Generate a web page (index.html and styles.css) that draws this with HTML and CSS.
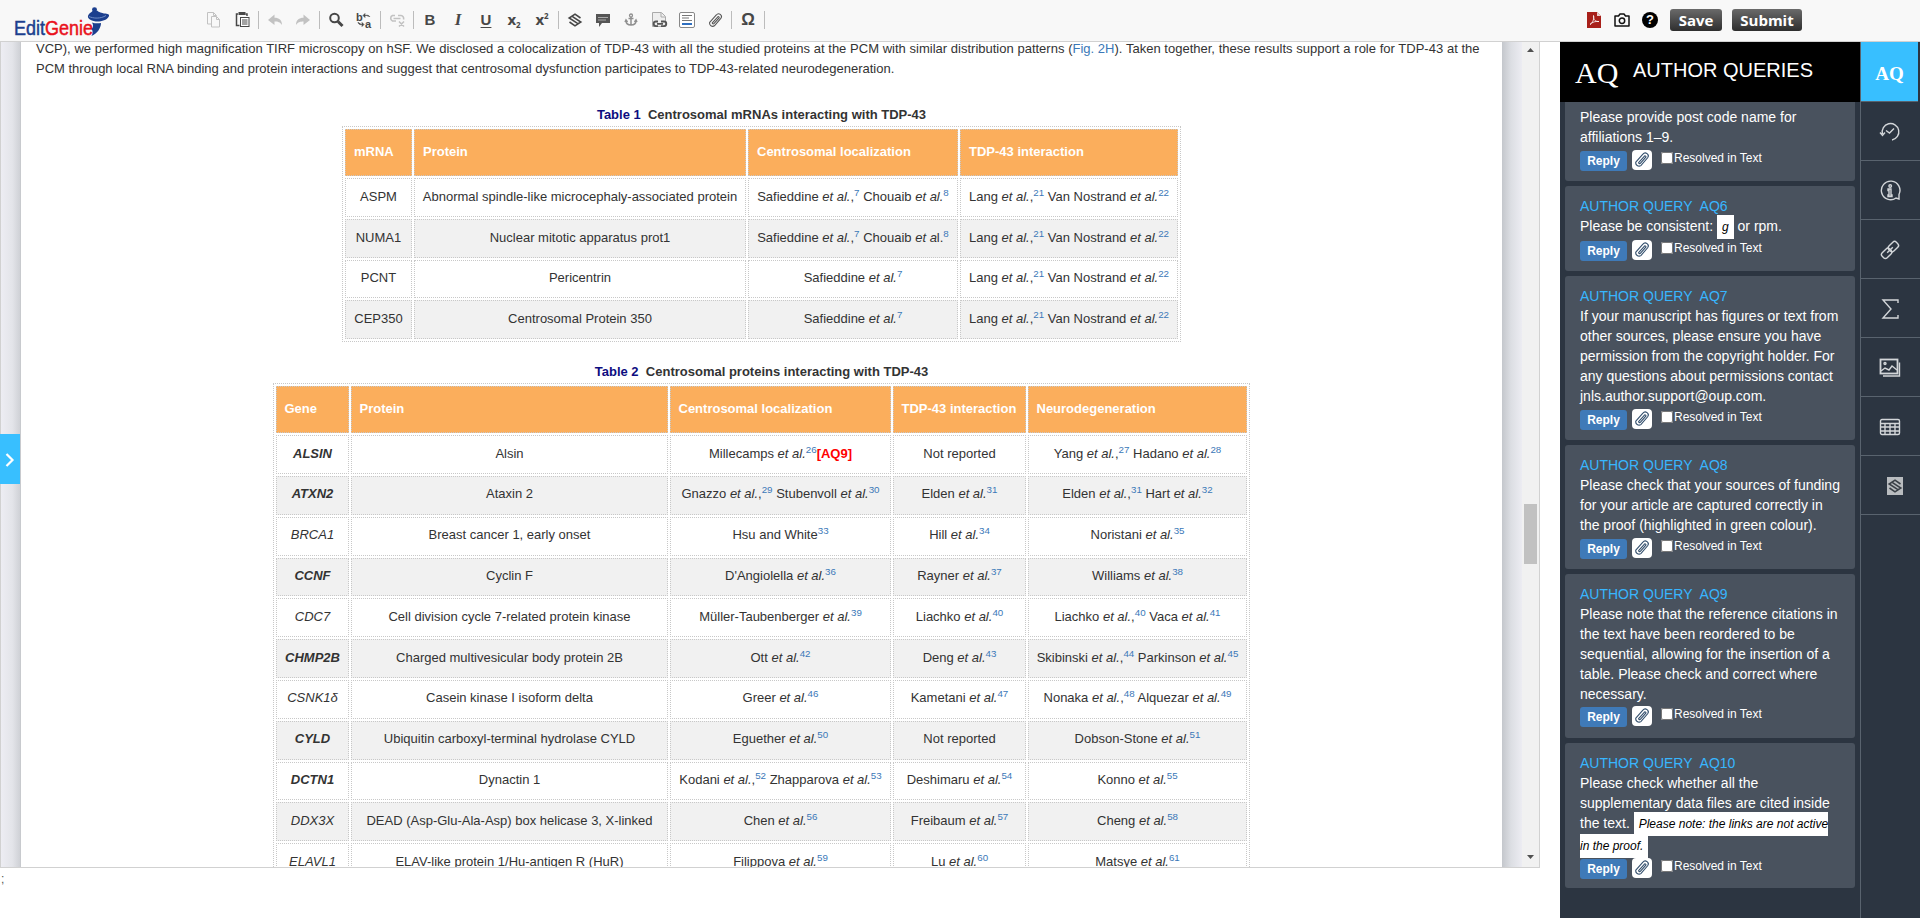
FILE: index.html
```html
<!DOCTYPE html>
<html lang="en">
<head>
<meta charset="utf-8">
<title>EditGenie</title>
<link rel="stylesheet" href="styles.css">
</head>
<body>
<svg class="defs" width="0" height="0">
  <symbol id="clip" viewBox="0 0 16 16"><path d="M2.500 9.800 8.800 2.800a2.600 2.600 0 0 1 4.200 3.200L7 13a3 3 0 0 1-4.500-3.200M5 10.300l5.200-5.800a.8.8 0 0 1 1.200 1L6.500 11a.9.9 0 0 1-1.500-.700" fill="none" stroke="currentColor" stroke-width="1" stroke-linecap="round"/></symbol>
  <symbol id="weave" viewBox="0 0 16 16"><path d="M13.500 6 8 2.200 2.200 6l8.300 5.300M2.500 10 8 13.800l5.800-3.800-8.300-5.300" fill="none" stroke="currentColor" stroke-width="1.600"/></symbol>
</svg>
<header class="topbar">
  <svg class="logo" width="100" height="38" viewBox="0 0 100 38">
    <text x="2" y="32" textLength="79" lengthAdjust="spacingAndGlyphs" class="logo-text"><tspan fill="#1c3f8e">Edit</tspan><tspan fill="#e9111c">Genie</tspan></text>
    <ellipse cx="82.500" cy="6.500" rx="2.500" ry="2.300" fill="#1c3f8e"/>
    <path d="M76 13c1-3 3-3 5-5.500h4c2 2 5 2 7 3 4 0 5.500 1 5 2.500-1 3-5 5-10 5.500-6 .5-12-2.500-11-5.500zM80 19.500c3 1 6 1 9 .5 0 5-4 11-9.500 13 1.500-3 1.500-5 0-7 2-1.500 2-4 .5-6.500z" fill="#1c3f8e"/>
    <path d="M77 13.500c4 2 12 2.500 17-1" stroke="#6f8cc4" stroke-width="1" fill="none"/>
  </svg>
  <div class="tools">
    <svg class="tb off" viewBox="0 0 28 28"><path d="M12 18H7.500V6.500h6l3 3M13.500 6.500v3h3M11.500 10.500h5l3 3v7.500h-8zM16.500 10.500v3h3" fill="none" stroke="currentColor"/></svg>
    <svg class="tb" viewBox="0 0 28 28"><path d="M10 8H8.500v11.500h3M17.500 8H19v2" fill="none" stroke="currentColor" stroke-width="1.500"/><rect x="10.500" y="6" width="7" height="3" fill="currentColor"/><rect x="12.500" y="11.500" width="8.500" height="9" fill="#fff" stroke="currentColor"/><path d="M14 14h5.500M14 16h5.500M14 18h5.500" stroke="currentColor"/></svg>
    <i class="sep"></i>
    <svg class="tb off" viewBox="0 0 28 28"><path d="M7 14l6.500-5.500v3.300c4.500 0 7.500 2.200 7.500 7.200-2-3-4-3.500-7.500-3.500V19z" fill="currentColor"/></svg>
    <svg class="tb off" viewBox="0 0 28 28"><path d="M21 14l-6.500-5.500v3.300c-4.500 0-7.500 2.200-7.500 7.200 2-3 4-3.500 7.500-3.500V19z" fill="currentColor"/></svg>
    <i class="sep"></i>
    <svg class="tb" viewBox="0 0 28 28"><circle cx="12.500" cy="12" r="4.300" fill="none" stroke="currentColor" stroke-width="2"/><path d="m16 15.500 4.500 4.500" stroke="currentColor" stroke-width="3"/></svg>
    <svg class="tb" viewBox="0 0 28 28"><text x="6" y="14.500" class="swap">b</text><text x="15" y="21.500" class="swap">a</text><path d="M20 11c-1-2-3-2-5-1.500M15 7.500v4l-2-2zM8 16c0 2 2 3 4 2.500M12 16.500v4l2-2z" fill="currentColor" stroke="currentColor" stroke-width=".6"/></svg>
    <i class="sep"></i>
    <svg class="tb off" viewBox="0 0 28 28"><path d="M12 9.500H9.500a3 3 0 0 0 0 5.500H13M15 9.500h3a3 3 0 0 1 2.500 4M10.500 12.500h7M16 15.500l5 5M21 15.500l-5 5" fill="none" stroke="currentColor" stroke-width="1.600"/></svg>
    <i class="sep"></i>
    <b class="tb glyph">B</b>
    <b class="tb glyph ital">I</b>
    <b class="tb glyph und">U</b>
    <b class="tb glyph ex">x<small class="low">2</small></b>
    <b class="tb glyph ex">x<small class="high">2</small></b>
    <i class="sep"></i>
    <svg class="tb"><use href="#weave" x="6" y="6" width="16" height="16"/></svg>
    <svg class="tb mid" viewBox="0 0 28 28"><path d="M7 8h14v9h-8l-3 4v-4H7z" fill="currentColor"/><path d="M9 11.500h10M9 14h8" stroke="#aaa"/></svg>
    <svg class="tb pale" viewBox="0 0 28 28"><circle cx="14" cy="9.500" r="1.500" fill="none" stroke="currentColor" stroke-width="1.300"/><path d="M14 11v8M11.500 12.500h5M9 14.500c0 3 2 4.500 5 4.500s5-1.500 5-4.500M8 16l1-2 1.500 2M17.500 16l1.500-2 1 2" fill="none" stroke="currentColor" stroke-width="1.500"/></svg>
    <svg class="tb mid" viewBox="0 0 28 28"><path d="M7.500 6.500h9l4 4v10h-13z" fill="#eee" stroke="#aaa"/><path d="M16 7v4h4" fill="none" stroke="#aaa"/><path d="M13 15.500h-2a2.300 2.300 0 0 0 0 4.600h2M16 15.500h3a2.300 2.300 0 0 1 0 4.600H16M12 17.800h6" fill="none" stroke="currentColor" stroke-width="1.800"/></svg>
    <svg class="tb mid" viewBox="0 0 28 28"><rect x="6.500" y="6.500" width="15" height="15" rx="1.500" fill="#fff" stroke="#888"/><path d="M9 9.500h10M9 12h7M9 14.500h10" stroke="#777"/><path d="M9 18h10" stroke="#2f6fc0" stroke-width="2"/></svg>
    <svg class="tb mid"><use href="#clip" x="6" y="6" width="17" height="17"/></svg>
    <i class="sep"></i>
    <b class="tb glyph omega">Ω</b>
    <i class="sep"></i>
  </div>
  <div class="actions">
    <svg width="14" height="16" viewBox="0 0 14 16"><path d="M0 0h10l4 4v12H0z" fill="#a8201a"/><path d="M10 0l4 4h-4z" fill="#ead0d0"/><path d="M3 12.500C6 10.500 7.500 6 6.500 3.500 6 8 9 10 12 9.500 9 9 5 10 3 12.500z" fill="none" stroke="#fff" stroke-width=".8"/></svg>
    <svg width="16" height="14" viewBox="0 0 16 14"><path d="M1 3h3.500L6 1h4l1.500 2H15v10H1z" fill="none" stroke="#111" stroke-width="1.500" stroke-linejoin="round"/><circle cx="8" cy="7.800" r="2.700" fill="none" stroke="#111" stroke-width="1.500"/></svg>
    <span class="help">?</span>
    <button class="dark save">Save</button>
    <button class="dark submit">Submit</button>
  </div>
</header>
<div class="body">
  <div class="left">
    <div class="editor">
      <div class="edge edge-left"></div>
      <main class="page">
        <p class="para"><span class="spread">VCP), we performed high magnification TIRF microscopy on hSF. We disclosed a colocalization of TDP-43 with all the studied proteins at the PCM with similar distribution patterns (<a>Fig. 2H</a>). Taken together, these results support a role for TDP-43 at the</span><br>PCM through local RNA binding and protein interactions and suggest that centrosomal dysfunction participates to TDP-43-related neurodegeneration.</p>
        <div class="caption first"><span>Table 1</span>&nbsp; Centrosomal mRNAs interacting with TDP-43</div>
        <table class="t1">
          <colgroup><col class="a1"><col class="a2"><col class="a3"><col class="a4"></colgroup>
          <tr><th>mRNA</th><th>Protein</th><th>Centrosomal localization</th><th>TDP-43 interaction</th></tr>
          <tr><td>ASPM</td><td>Abnormal spindle-like microcephaly-associated protein</td><td>Safieddine <i>et al.</i>,<sup>7</sup> Chouaib <i>et al.</i><sup>8</sup></td><td>Lang <i>et al.</i>,<sup>21</sup> Van Nostrand <i>et al.</i><sup>22</sup></td></tr>
          <tr><td>NUMA1</td><td>Nuclear mitotic apparatus prot1</td><td>Safieddine <i>et al.</i>,<sup>7</sup> Chouaib <i>et a</i>l.<sup>8</sup></td><td>Lang <i>et al.</i>,<sup>21</sup> Van Nostrand <i>et al.</i><sup>22</sup></td></tr>
          <tr><td>PCNT</td><td>Pericentrin</td><td>Safieddine <i>et al.</i><sup>7</sup></td><td>Lang <i>et al.</i>,<sup>21</sup> Van Nostrand <i>et al.</i><sup>22</sup></td></tr>
          <tr><td>CEP350</td><td>Centrosomal Protein 350</td><td>Safieddine <i>et al.</i><sup>7</sup></td><td>Lang <i>et al.</i>,<sup>21</sup> Van Nostrand <i>et al.</i><sup>22</sup></td></tr>
        </table>
        <div class="caption second"><span>Table 2</span>&nbsp; Centrosomal proteins interacting with TDP-43</div>
        <table class="t2">
          <colgroup><col class="b1"><col class="b2"><col class="b3"><col class="b4"><col class="b5"></colgroup>
          <tr><th>Gene</th><th>Protein</th><th>Centrosomal localization</th><th>TDP-43 interaction</th><th>Neurodegeneration</th></tr>
          <tr><td><b>ALSIN</b></td><td>Alsin</td><td>Millecamps <i>et al.</i><sup>26</sup><strong class="aq">[AQ9]</strong></td><td>Not reported</td><td>Yang <i>et al.</i>,<sup>27</sup> Hadano <i>et al.</i><sup>28</sup></td></tr>
          <tr><td><b>ATXN2</b></td><td>Ataxin 2</td><td>Gnazzo <i>et al.</i>,<sup>29</sup> Stubenvoll <i>et al.</i><sup>30</sup></td><td>Elden <i>et al.</i><sup>31</sup></td><td>Elden <i>et al.</i>,<sup>31</sup> Hart <i>et al.</i><sup>32</sup></td></tr>
          <tr><td>BRCA1</td><td>Breast cancer 1, early onset</td><td>Hsu and White<sup>33</sup></td><td>Hill <i>et al.</i><sup>34</sup></td><td>Noristani <i>et al.</i><sup>35</sup></td></tr>
          <tr><td><b>CCNF</b></td><td>Cyclin F</td><td>D'Angiolella <i>et al.</i><sup>36</sup></td><td>Rayner <i>et al.</i><sup>37</sup></td><td>Williams <i>et al.</i><sup>38</sup></td></tr>
          <tr><td>CDC7</td><td>Cell division cycle 7-related protein kinase</td><td>Müller-Taubenberger <i>et al.</i><sup>39</sup></td><td>Liachko <i>et al.</i><sup>40</sup></td><td>Liachko <i>et al.</i>,<sup>40</sup> Vaca <i>et al.</i><sup>41</sup></td></tr>
          <tr><td><b>CHMP2B</b></td><td>Charged multivesicular body protein 2B</td><td>Ott <i>et al.</i><sup>42</sup></td><td>Deng <i>et al.</i><sup>43</sup></td><td>Skibinski <i>et al.</i>,<sup>44</sup> Parkinson <i>et al.</i><sup>45</sup></td></tr>
          <tr><td>CSNK1δ</td><td>Casein kinase I isoform delta</td><td>Greer <i>et al.</i><sup>46</sup></td><td>Kametani <i>et al.</i><sup>47</sup></td><td>Nonaka <i>et al.</i>,<sup>48</sup> Alquezar <i>et al.</i><sup>49</sup></td></tr>
          <tr><td><b>CYLD</b></td><td>Ubiquitin carboxyl-terminal hydrolase CYLD</td><td>Eguether <i>et al.</i><sup>50</sup></td><td>Not reported</td><td>Dobson-Stone <i>et al.</i><sup>51</sup></td></tr>
          <tr><td><b>DCTN1</b></td><td>Dynactin 1</td><td>Kodani <i>et al.</i>,<sup>52</sup> Zhapparova <i>et al.</i><sup>53</sup></td><td>Deshimaru <i>et al.</i><sup>54</sup></td><td>Konno <i>et al.</i><sup>55</sup></td></tr>
          <tr><td>DDX3X</td><td>DEAD (Asp-Glu-Ala-Asp) box helicase 3, X-linked</td><td>Chen <i>et al.</i><sup>56</sup></td><td>Freibaum <i>et al.</i><sup>57</sup></td><td>Cheng <i>et al.</i><sup>58</sup></td></tr>
          <tr><td>ELAVL1</td><td>ELAV-like protein 1/Hu-antigen R (HuR)</td><td>Filippova <i>et al.</i><sup>59</sup></td><td>Lu <i>et al.</i><sup>60</sup></td><td>Matsye <i>et al.</i><sup>61</sup></td></tr>
        </table>
      </main>
      <div class="edge edge-right"></div>
      <div class="scroll">
        <svg width="7" height="4" viewBox="0 0 7 4"><path d="M0 4l3.500-4L7 4z" fill="#505050"/></svg>
        <div class="track"><div class="thumb"></div></div>
        <svg width="7" height="4" viewBox="0 0 7 4"><path d="M0 0l3.500 4L7 0z" fill="#505050"/></svg>
      </div>
      <div class="drawer"><svg width="10" height="14" viewBox="0 0 10 14"><path d="M1.500 1l6 6-6 6" fill="none" stroke="#fff" stroke-width="2.200"/></svg></div>
    </div>
    <div class="foot">;</div>
  </div>
  <aside class="queries">
    <h1 class="head"><span class="mark">AQ</span>AUTHOR QUERIES</h1>
    <section class="card c5"><p>Please provide post code name for affiliations 1–9.</p><div class="row"><button class="reply">Reply</button><span class="attach"><svg width="18" height="18"><use href="#clip"/></svg></span><i class="box"></i><span class="res">Resolved in Text</span></div></section>
    <section class="card c6"><h2>AUTHOR QUERY&nbsp; AQ6</h2><p>Please be consistent: <em>g</em> or rpm.</p><div class="row"><button class="reply">Reply</button><span class="attach"><svg width="18" height="18"><use href="#clip"/></svg></span><i class="box"></i><span class="res">Resolved in Text</span></div></section>
    <section class="card c7"><h2>AUTHOR QUERY&nbsp; AQ7</h2><p>If your manuscript has figures or text from other sources, please ensure you have permission from the copyright holder. For any questions about permissions contact jnls.author.support@oup.com.</p><div class="row"><button class="reply">Reply</button><span class="attach"><svg width="18" height="18"><use href="#clip"/></svg></span><i class="box"></i><span class="res">Resolved in Text</span></div></section>
    <section class="card c8"><h2>AUTHOR QUERY&nbsp; AQ8</h2><p>Please check that your sources of funding for your article are captured correctly in the proof (highlighted in green colour).</p><div class="row"><button class="reply">Reply</button><span class="attach"><svg width="18" height="18"><use href="#clip"/></svg></span><i class="box"></i><span class="res">Resolved in Text</span></div></section>
    <section class="card c9"><h2>AUTHOR QUERY&nbsp; AQ9</h2><p>Please note that the reference citations in the text have been reordered to be sequential, allowing for the insertion of a table. Please check and correct where necessary.</p><div class="row"><button class="reply">Reply</button><span class="attach"><svg width="18" height="18"><use href="#clip"/></svg></span><i class="box"></i><span class="res">Resolved in Text</span></div></section>
    <section class="card c10"><h2>AUTHOR QUERY&nbsp; AQ10</h2><p>Please check whether all the supplementary data files are cited inside the text. <em>Please note: the links are not active<br>in the proof.</em></p><div class="row"><button class="reply">Reply</button><span class="attach"><svg width="18" height="18"><use href="#clip"/></svg></span><i class="box"></i><span class="res">Resolved in Text</span></div></section>
  </aside>
  <nav class="rail">
    <div class="tab on">AQ</div>
    <div class="tab"><svg width="22" height="22" viewBox="0 0 22 22"><path d="M3.500 13A8.300 8.300 0 1 1 13 19M1 11.500l2.500 3 2.500-3M7 9.500l3.500 2.500 4.500-4.500" /></svg></div>
    <div class="tab"><svg width="22" height="22" viewBox="0 0 22 22"><path d="M17 18A9.300 9.300 0 1 1 20 14.500v4.500zM9 9h3v6h1v1.500H9V15h1v-4.500H9z"/><circle cx="11.200" cy="6" r="1.300"/></svg></div>
    <div class="tab"><svg width="22" height="22" viewBox="0 0 22 22"><g transform="rotate(-45 11 11)"><rect x="1" y="7.500" width="10.500" height="7" rx="2.500"/><rect x="10.500" y="7.500" width="10.500" height="7" rx="2.500"/><path d="M7 11h8"/></g></svg></div>
    <div class="tab"><svg width="20" height="22" viewBox="0 0 20 22"><path d="M18 5V2H3l8 9-8 9h15v-3"/></svg></div>
    <div class="tab"><svg width="22" height="20" viewBox="0 0 22 20"><rect x="1.500" y="1.500" width="17" height="14" stroke-width="1.800"/><path d="M20.500 4.500v13.500H4M2 13l4-3 4 2 3-4 5 4"/><circle cx="6" cy="5.500" r="1"/></svg></div>
    <div class="tab"><svg width="22" height="18" viewBox="0 0 22 18"><rect x="1.500" y="1.500" width="19" height="15" rx="1.500"/><path d="M1.500 5.500h19M1.500 9h19M1.500 13h19M6 5.500v11M11 5.500v11M16 5.500v11"/></svg></div>
    <div class="tab last"><span class="chip"><svg width="16" height="18"><use href="#weave" y="1" width="16" height="16"/></svg></span></div>
  </nav>
</div>
</body>
</html>
```
FILE: styles.css
```css
* { box-sizing: border-box; }
body { margin: 0; width: 1920px; height: 918px; overflow: hidden; background: #fff; font-family: "Liberation Sans", Arial, sans-serif; font-size: 13px; color: #333; }
.defs { position: absolute; }
h1, h2, p { margin: 0; font-weight: normal; }
button { border: 0; font-family: inherit; padding: 0; }

.topbar { height: 42px; display: flex; align-items: flex-start; background: #f8f8f8; border-bottom: 1px solid #d1d1d1; }
.logo { margin: 3px 88px 0 12px; overflow: visible; }
.logo-text { font-size: 21px; stroke-width: .5px; }
.logo-text tspan:first-child { stroke: #1c3f8e; }
.logo-text tspan:last-child { stroke: #e9111c; }
.tools { display: flex; align-items: center; margin-top: 6px; width: 1382px; }
.tb { width: 28px; height: 28px; flex: none; color: #474747; display: block; }
.off { color: #c2c2c2; }
.pale { color: #909090; }
.mid { color: #555; }
.sep { width: 1px; height: 18px; margin: 0 2px; background: #bcbcbc; flex: none; }
.glyph { font-size: 15px; line-height: 28px; text-align: center; }
.ital { font-style: italic; font-family: "Liberation Serif", serif; font-size: 17px; }
.und { text-decoration: underline; text-underline-offset: 2px; }
.ex { font-family: "Noto Sans", sans-serif; font-weight: 700; line-height: 26px; }
.omega { font-size: 17px; font-weight: 700; }
.glyph small { font-size: 8px; line-height: 0; position: relative; }
.low { top: 3px; }
.high { top: -6px; }
.swap { font: bold 11px "Liberation Sans"; fill: #474747; }
.actions { display: flex; align-items: center; margin-top: 9px; height: 22px; margin-left: 5px; }
.actions svg + svg { margin-left: 13px; }
.help { width: 16px; height: 16px; margin: 0 12px; border-radius: 50%; background: #000; color: #fff; font-weight: bold; font-size: 13px; line-height: 16px; text-align: center; }
.dark { height: 22px; border-radius: 3px; background: linear-gradient(#6a6a6a, #2e2e2e); color: #fff; font: bold 15px/22px "Open Sans", sans-serif; }
.save { width: 52px; }
.submit { width: 70px; margin-left: 10px; }

.body { display: flex; height: 876px; }
.left { width: 1560px; }
.editor { position: relative; width: 1540px; height: 826px; display: flex; border: solid #d1d1d1; border-width: 0 1px 1px; }
.edge { width: 20px; height: 825px; }
.edge-left { background: linear-gradient(90deg, #ededf3, #e3e4e9 60%, #cfd1d6); border-right: 1px solid #c8cace; }
.edge-right { background: linear-gradient(90deg, #c4c7cc, #dcdee3 45%, #ececf2); }
.page { width: 1481px; height: 825px; overflow: hidden; padding-left: 15px; }
.para { line-height: 20px; margin-top: -3px; white-space: nowrap; }
.spread { word-spacing: .12px; }
.para a, sup { color: #3b78b8; }
.caption { width: 1451px; text-align: center; line-height: 20px; font-weight: bold; }
.caption span { color: #0d0d80; }
.first { margin-top: 26px; }
.second { margin-top: 20px; }
table { table-layout: fixed; border: 1px dotted #c8c8c8; border-spacing: 2px; }
.t1 { width: 839px; margin: 1px 0 0 306px; }
.t2 { width: 977px; margin: 1px 0 0 237px; }
.a1 { width: 67px; } .a2 { width: 332px; } .a3 { width: 210px; } .a4 { width: 218px; }
.b1 { width: 73px; } .b2 { width: 317px; } .b3 { width: 221px; } .b4 { width: 133px; } .b5 { width: 219px; }
th, td { border: 1px dotted #c8c8c8; white-space: nowrap; padding: 0 8px; line-height: 20px; }
th { height: 47px; background: #fbae5c; color: #fff; text-align: left; padding-bottom: 2px; }
.t2 th { padding-left: 7.5px; padding-right: 7px; }
td { height: 38.8px; padding: 0 0 2px; text-align: center; }
.t1 td { padding-bottom: 1px; }
tr:nth-child(odd) td { background: #f1f1f1; }
.t2 td:first-child { font-style: italic; }
sup { font-size: 9.75px; line-height: 0; position: relative; top: -5px; vertical-align: baseline; }
.aq { color: #f00; }
.scroll { width: 17px; height: 825px; background: #f1f1f1; display: flex; flex-direction: column; align-items: center; padding: 6px 0 8px; }
.track { flex: 1; width: 13px; padding-top: 452px; }
.thumb { height: 60px; background: #c1c1c1; }
.drawer { position: absolute; left: -1px; top: 392px; width: 21px; height: 50px; background: #38bfff; border-right: 1px solid #c8cace; display: flex; align-items: center; padding-left: 5px; padding-top: 2px; }
.foot { font-size: 12px; line-height: 20px; padding: 1px 0 0 1px; color: #555; }

.queries { width: 300px; height: 876px; background: #2c3541; padding: 0 5px; overflow: hidden; }
.head { height: 60px; margin: 0 -5px; background: #000; color: #fff; font-size: 20px; line-height: 56px; padding-left: 15px; white-space: nowrap; display: flex; }
.mark { font: 30px/62px "Liberation Serif", serif; width: 58px; }
.card { background: #49525e; color: #fff; border-radius: 3px; padding: 10px 12px 0 15px; margin-bottom: 5px; font-size: 14px; line-height: 20px; }
.card h2 { font-size: 14px; color: #38b6ff; }
.card em { font-size: 12px; line-height: 21px; background: #fff; color: #000; padding: 5px; }
.c5 { height: 79px; padding-top: 5px; border-radius: 0 0 3px 3px; }
.c6 { height: 85px; } .c7 { height: 164px; } .c8 { height: 124px; } .c9 { height: 164px; } .c10 { height: 145px; }
.c6 p { height: 21px; }
.c9 .row { margin-top: 2px; }
.c10 p { height: 82px; }
.row { display: flex; align-items: flex-start; margin-top: 3px; height: 21px; }
.reply { width: 47px; height: 20px; margin-top: 1px; border-radius: 3px; background: #3f7ab8; color: #fff; font-size: 12px; line-height: 18px; font-weight: bold; padding-bottom: 1px; }
.attach { width: 20px; height: 20px; border-radius: 4px; margin: 0 9px 0 5px; padding: 1px; background: #fff; color: #34506e; }
.attach svg { display: block; }
.box { width: 12px; height: 12px; margin-top: 2px; background: #fff; outline: 1px solid #777; outline-offset: -1px; border-radius: 2px; }
.res { font-size: 12px; line-height: 16px; margin-left: 1px; white-space: nowrap; }

.rail { width: 60px; background: #2c3541; border-left: 1px solid #59636e; }
.tab { height: 59px; border-bottom: 1px solid #59636e; display: flex; align-items: center; justify-content: center; padding: 1px 2px 0 0; }
.tab > svg { fill: none; stroke: #d3d6d9; stroke-width: 1.4; }
.on { height: 60px; background: #38bfff; color: #fff; font: 600 19px "Liberation Serif", serif; width: 57px; padding: 4px 0 0; }
.last { padding-left: 10px; }
.chip { width: 16px; height: 18px; background: #b9bcbf; color: #3a4047; }
.chip svg { display: block; }
```
